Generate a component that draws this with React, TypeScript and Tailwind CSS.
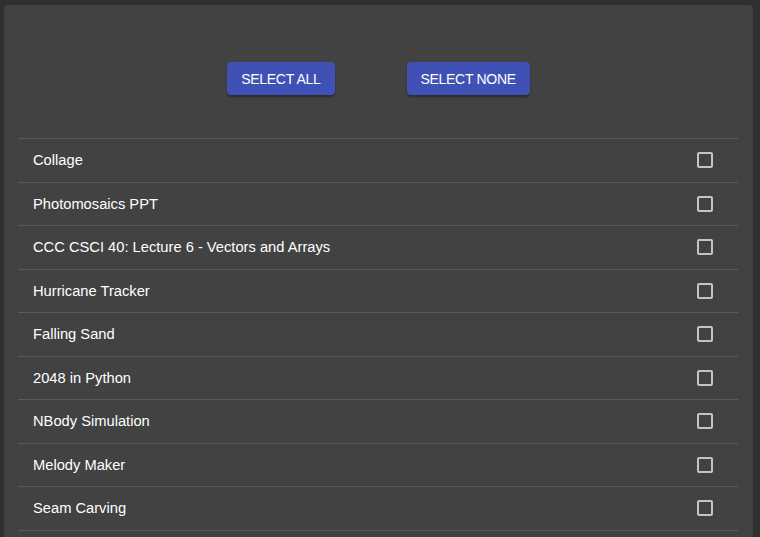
import React from "react";

const items = [
  "Collage",
  "Photomosaics PPT",
  "CCC CSCI 40: Lecture 6 - Vectors and Arrays",
  "Hurricane Tracker",
  "Falling Sand",
  "2048 in Python",
  "NBody Simulation",
  "Melody Maker",
  "Seam Carving",
];

export default function App() {
  return (
    <div
      className="w-[760px] h-[537px] overflow-hidden bg-[#303030] pl-[4px] pr-[7px] pt-[5px]"
      style={{ fontFamily: '"Liberation Sans", Arial, sans-serif' }}
    >
      <div className="bg-[#424242] rounded-[4px] h-[600px] pl-[14px] pr-[15px]">
        <div className="flex justify-center gap-[72px] pt-[57px] pb-[43px] pl-[1px]">
          <button className="h-[33px] px-[14px] pt-[1px] rounded-[4px] bg-[#3f51b5] text-white text-[14px] tracking-[-0.3px] uppercase shadow-[0_2px_2px_rgba(0,0,0,0.35)]">
            Select All
          </button>
          <button className="h-[33px] px-[14px] pt-[1px] rounded-[4px] bg-[#3f51b5] text-white text-[14px] tracking-[-0.3px] uppercase shadow-[0_2px_2px_rgba(0,0,0,0.35)]">
            Select None
          </button>
        </div>
        <div className="border-b border-[#5a5a5a]">
          {items.map((t) => (
            <div
              key={t}
              className="h-[43.5px] border-t border-[#5a5a5a] flex items-center justify-between pl-[15px] pr-[25px]"
            >
              <span className="text-white text-[14.7px]">{t}</span>
              <span className="w-[16px] h-[16px] border-2 border-[#c4c4c4] rounded-[2px]" />
            </div>
          ))}
        </div>
      </div>
    </div>
  );
}
